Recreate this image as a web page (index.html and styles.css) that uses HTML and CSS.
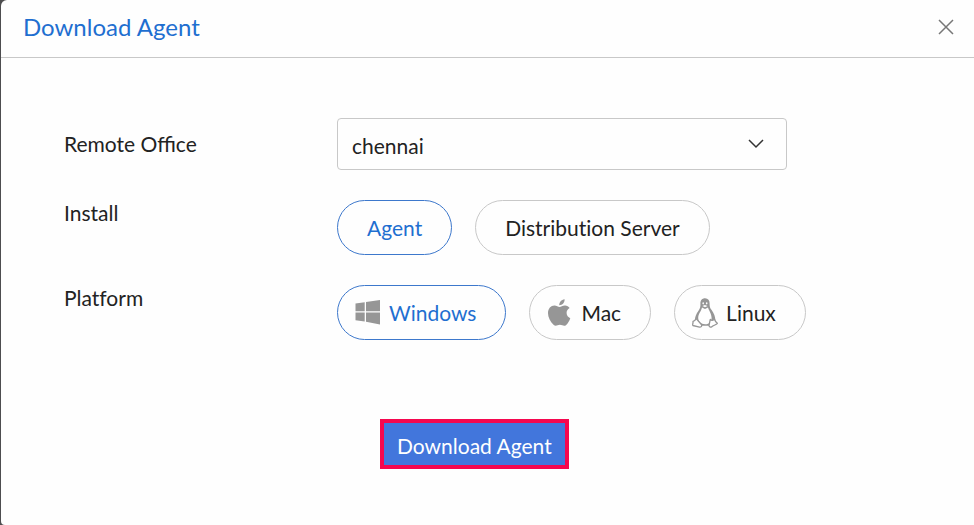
FILE: index.html
```html
<!DOCTYPE html>
<html lang="en">
<head>
  <meta charset="UTF-8">
  <meta name="viewport" content="width=device-width, initial-scale=1.0">
  <title>Download Agent</title>
  <link rel="stylesheet" href="styles.css">
</head>
<body>
  <main class="dialog">
    <header class="dialog-header">
      <h1>Download Agent</h1>
      <button type="button" class="close" aria-label="Close">
        <svg width="16" height="16" viewBox="0 0 16 16" fill="none" stroke="#777" stroke-width="1.5">
          <path d="M1 1l14 14M15 1L1 15"/>
        </svg>
      </button>
    </header>

    <form class="agent-form">
      <div class="row row-office">
        <label class="row-label" for="office">Remote Office</label>
        <div class="select-box">
          <select id="office">
            <option>chennai</option>
          </select>
          <svg class="chevron" width="16" height="10" viewBox="0 0 16 10" fill="none" stroke="#333" stroke-width="1.5">
            <path d="M1 1l7 7 7-7"/>
          </svg>
        </div>
      </div>

      <div class="row" role="group" aria-labelledby="installLabel">
        <span class="row-label" id="installLabel">Install</span>
        <div class="options">
          <button type="button" class="pill selected" aria-pressed="true">Agent</button>
          <button type="button" class="pill" aria-pressed="false">Distribution Server</button>
        </div>
      </div>

      <div class="row" role="group" aria-labelledby="platformLabel">
        <span class="row-label" id="platformLabel">Platform</span>
        <div class="options">
          <button type="button" class="pill with-icon selected" aria-pressed="true">
            <svg width="26" height="30" viewBox="0 0 26 30" fill="#969696">
              <path d="M.5 5.600l9.200-1.400v9H.5zM11 4L25 2v11.200H11zM.5 14.600h9.200v9L.5 22.300zM11 14.600h14v12l-14-2.800z"/>
            </svg>
            Windows
          </button>
          <button type="button" class="pill with-icon" aria-pressed="false">
            <svg width="26" height="30" viewBox="0 0 26 30" fill="#969696">
              <path d="M17.600 1.200c.3 3-2.200 6-5.300 6-.3-2.900 2.200-5.700 5.300-6z"/>
              <path d="M12.600 8.900c1.400 0 2.900-1.500 5.500-1.400 1.900.1 3.500 1 4.500 2.500-2 1.200-3.100 2.900-3 5.100.1 2.500 1.500 4.200 3.700 5.100-.9 2.700-2.500 5.200-4.100 6.700-1.300 1.200-2.500 1-4 .4-1.600-.7-3-.7-4.600 0-1.600.7-2.800.7-4.100-.6C3.200 23.600 1 19 1 15.200 1 10.500 3.900 7.500 7.400 7.500c2.200 0 3.700 1.400 5.200 1.400z"/>
            </svg>
            Mac
          </button>
          <button type="button" class="pill with-icon" aria-pressed="false">
            <svg width="26" height="30" viewBox="0 0 26 30">
              <path fill="#969696" d="M13.100.2c3 0 4.500 2.200 4.500 5.200 0 2.700.2 4.100 2 6.700 2.300 3.400 3.900 6.500 3.600 10.200l-2.700 5.500H7l-4-5.600c-.2-3.200 1.300-6.400 3.500-9.400 1.700-2.400 2-3.900 1.900-7C8.300 2.300 10 .2 13.100.2z"/>
              <path fill="#fff" d="M10 9.600l3 1.500 3-1.700c.7 2.800 3.600 6 3.600 10.600 0 3.800-2.100 6.300-6.400 6.300-4.200 0-7-2.500-7-6.200 0-4.200 3-6.700 3.800-10.500z"/>
              <ellipse cx="11.200" cy="5.300" rx=".8" ry="1.100" fill="#fff"/>
              <ellipse cx="14.700" cy="5.300" rx=".8" ry="1.100" fill="#fff"/>
              <path fill="#fff" d="M10.400 7.900l2.500-1 2.700 1-2.600 1.300z"/>
              <path fill="#fff" stroke="#969696" stroke-width="1.300" stroke-linejoin="round" d="M4.200 20.600l5.200 5.900c.8 1.200-.1 2.700-1.900 2.600L.9 27.500c-.7-.5.3-2 .1-4.100 1.400-.2 2.200-1.100 3.200-2.800zM18.300 21.400c1 1.400 3 1.200 4.300-.3.400 2.300 1 3 2.800 4.100.3 1.300-4.500 2-5.700 3.600-1.300.6-2.500.1-2.700-1.400z"/>
            </svg>
            Linux
          </button>
        </div>
      </div>

      <div class="actions">
        <button type="submit" class="download">Download Agent</button>
      </div>
    </form>
  </main>
</body>
</html>
```
FILE: styles.css
```css
* {
  box-sizing: border-box;
}

body {
  margin: 0;
  padding-left: 1px;
  background: #4d4d4f;
  color: #222;
  font-family: Lato, "Liberation Sans", sans-serif;
  font-size: 21px;
  line-height: 26px;
}

button,
select {
  font: inherit;
  color: inherit;
}

button {
  cursor: pointer;
}

.dialog {
  min-height: 100vh;
  background: #fefefe;
  border-radius: 6px 0 0 4px;
}

/* Header */
.dialog-header {
  display: flex;
  align-items: center;
  justify-content: space-between;
  padding: 11px 16px 14px 22px;
  border-bottom: 1px solid #c8c8c8;
}

h1 {
  margin: 0;
  color: #1f6fd0;
  font-size: 24px;
  font-weight: 400;
  line-height: 32px;
}

.close {
  display: flex;
  padding: 4px;
  border: none;
  background: none;
}

/* Form */
.agent-form {
  display: flex;
  flex-direction: column;
  gap: 30px;
  padding: 60px 24px 56px 63px;
}

.row {
  display: flex;
  align-items: flex-start;
  font-variant-ligatures: none;
}

.row-office {
  align-items: center;
  font-variant-ligatures: normal;
}

.row-label {
  flex: 0 0 273px;
}

.select-box {
  display: grid;
  flex: 0 1 450px;
  align-items: center;
}

.select-box select,
.chevron {
  grid-area: 1 / 1;
}

.select-box select {
  appearance: none;
  width: 100%;
  height: 52px;
  padding: 4px 44px 0 14px;
  border: 1px solid #c8c8c8;
  border-radius: 4px;
  background: none;
}

.chevron {
  justify-self: end;
  margin-right: 23px;
  pointer-events: none;
}

.options {
  display: flex;
  flex-wrap: wrap;
  gap: 23px;
}

.pill {
  display: flex;
  align-items: center;
  height: 55px;
  padding: 0 29px;
  border: 1px solid #c8c8c8;
  border-radius: 28px;
  background: none;
  font-variant-ligatures: none;
}

.pill.selected {
  border-color: #3d78cc;
  color: #1f6fd0;
}

.with-icon {
  gap: 8px;
  padding-left: 17px;
}

/* Submit */
.actions {
  padding: 49px 0 0 316px;
}

.download {
  height: 50px;
  padding: 4px 13px 0;
  border: 4px solid #f5074f;
  background: #4276dc;
  color: #fff;
}
```
